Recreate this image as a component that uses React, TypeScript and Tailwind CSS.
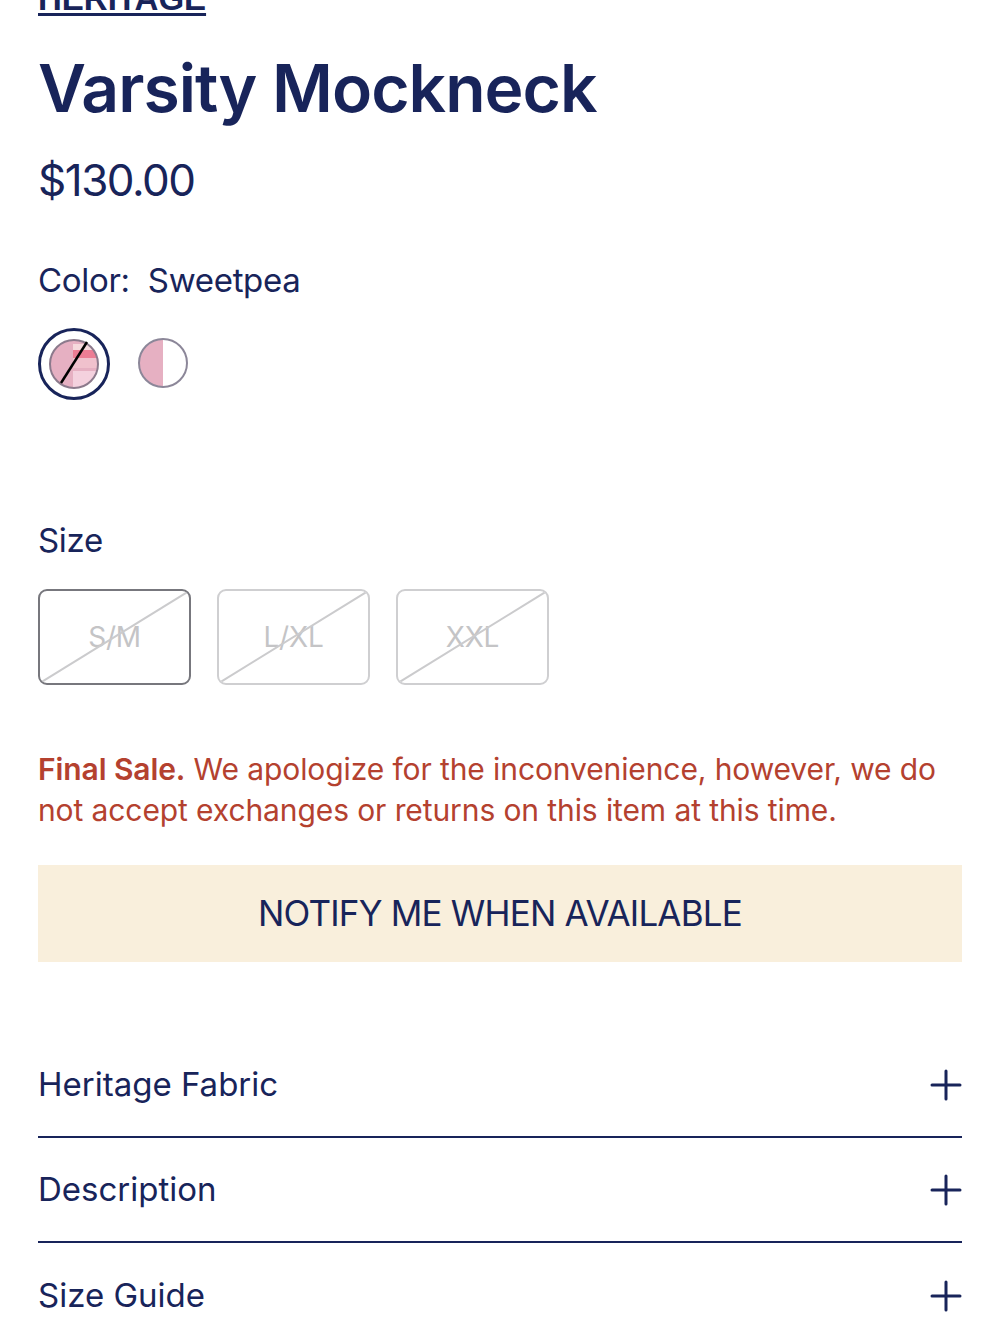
import React from "react";

const navy = "text-[#18245a]";

function Plus() {
  return (
    <svg width="32" height="32" viewBox="0 0 32 32" className="shrink-0">
      <path d="M16 2 V30 M2 16 H30" stroke="#18245a" strokeWidth="3" strokeLinecap="round" />
    </svg>
  );
}

function SizeBox({ label, dark }: { label: string; dark?: boolean }) {
  return (
    <div
      className={`relative w-[153px] h-[96px] rounded-[9px] border-2 ${dark ? "border-[#77777d]" : "border-[#cfcfd1]"} flex items-center justify-center overflow-hidden`}
    >
      <span className="text-[28px] text-[#c4c4c6] tracking-[-0.2px]">{label}</span>
      <svg className="absolute inset-0" width="100%" height="100%" viewBox="0 0 149 92" preserveAspectRatio="none">
        <line x1="0" y1="92" x2="149" y2="0" stroke="#cbcbcd" strokeWidth="2" />
      </svg>
    </div>
  );
}

function Row({ label, last }: { label: string; last?: boolean }) {
  return (
    <div className={`flex items-center justify-between h-[105px] ${last ? "" : "border-b-2 border-[#18245a]"}`}>
      <span className={`text-[33px] ${navy} tracking-[0px]`}>{label}</span>
      <Plus />
    </div>
  );
}

export default function App() {
  return (
    <div className="w-[1000px] h-[1333px] overflow-hidden bg-white px-[38px]" style={{ fontFamily: "Inter, 'Noto Sans', sans-serif" }}>
      <div className="mt-[-19px] h-[40px]">
        <span
          className="text-[33px] font-bold underline decoration-[3px] underline-offset-[3px] text-[#18245a] leading-[36px]"
          style={{ fontFamily: "'Liberation Sans', Arial, sans-serif" }}
        >
          HERITAGE
        </span>
      </div>
      <h1 className={`mt-[23px] text-[66px] font-semibold leading-[88px] tracking-[-1px] ${navy}`}>Varsity Mockneck</h1>
      <div className={`mt-[18px] text-[44px] leading-[60px] tracking-[-1.5px] ${navy}`}>$130.00</div>
      <div className={`mt-[48px] text-[33px] leading-[44px] ${navy} tracking-[-0.3px]`}>
        Color:&nbsp; Sweetpea
      </div>
      <div className="mt-[26px] flex items-center gap-[27px]">
        <div className="w-[72px] h-[72px] rounded-full border-[3px] border-[#18245a] flex items-center justify-center">
          <svg width="50" height="50" viewBox="0 0 50 50">
            <defs>
              <clipPath id="c1">
                <circle cx="25" cy="25" r="24" />
              </clipPath>
            </defs>
            <g clipPath="url(#c1)">
              <rect x="0" y="0" width="50" height="50" fill="#e6b0c2" />
              <rect x="24" y="5" width="26" height="8" fill="#f6d9dd" />
              <rect x="24" y="11" width="26" height="8" fill="#ec7d94" />
              <rect x="24" y="19" width="26" height="10" fill="#f0c1cd" />
              <rect x="24" y="32" width="26" height="18" fill="#f4d1de" />
            </g>
            <circle cx="25" cy="25" r="24" fill="none" stroke="#8c7a8c" strokeWidth="2" />
            <line x1="12" y1="44" x2="38" y2="3" stroke="#000" strokeWidth="2.5" />
          </svg>
        </div>
        <svg width="52" height="52" viewBox="0 0 52 52" className="-mt-[3px]">
          <defs>
            <clipPath id="c2">
              <circle cx="26" cy="26" r="24" />
            </clipPath>
          </defs>
          <g clipPath="url(#c2)">
            <rect x="0" y="0" width="26" height="52" fill="#e6b0c2" />
            <rect x="26" y="0" width="26" height="52" fill="#fff" />
          </g>
          <circle cx="26" cy="26" r="24" fill="none" stroke="#8c8799" strokeWidth="2" />
        </svg>
      </div>
      <div className={`mt-[118px] text-[33px] leading-[44px] ${navy} tracking-[-0.3px]`}>Size</div>
      <div className="mt-[27px] flex gap-[26px]">
        <SizeBox label="S/M" dark />
        <SizeBox label="L/XL" />
        <SizeBox label="XXL" />
      </div>
      <p className="mt-[64px] text-[30px] leading-[41px] text-[#b4412f] tracking-[-0.1px]">
        <span className="font-semibold">Final Sale.</span> We apologize for the inconvenience, however, we do not accept exchanges or returns on this item at this time.
      </p>
      <div className="mt-[34px] h-[97px] bg-[#f9efdc] flex items-center justify-center">
        <span className={`text-[35px] ${navy} tracking-[-0.8px]`}>NOTIFY ME WHEN AVAILABLE</span>
      </div>
      <div className="mt-[71px]">
        <Row label="Heritage Fabric" />
        <Row label="Description" />
        <Row label="Size Guide" last />
      </div>
    </div>
  );
}
